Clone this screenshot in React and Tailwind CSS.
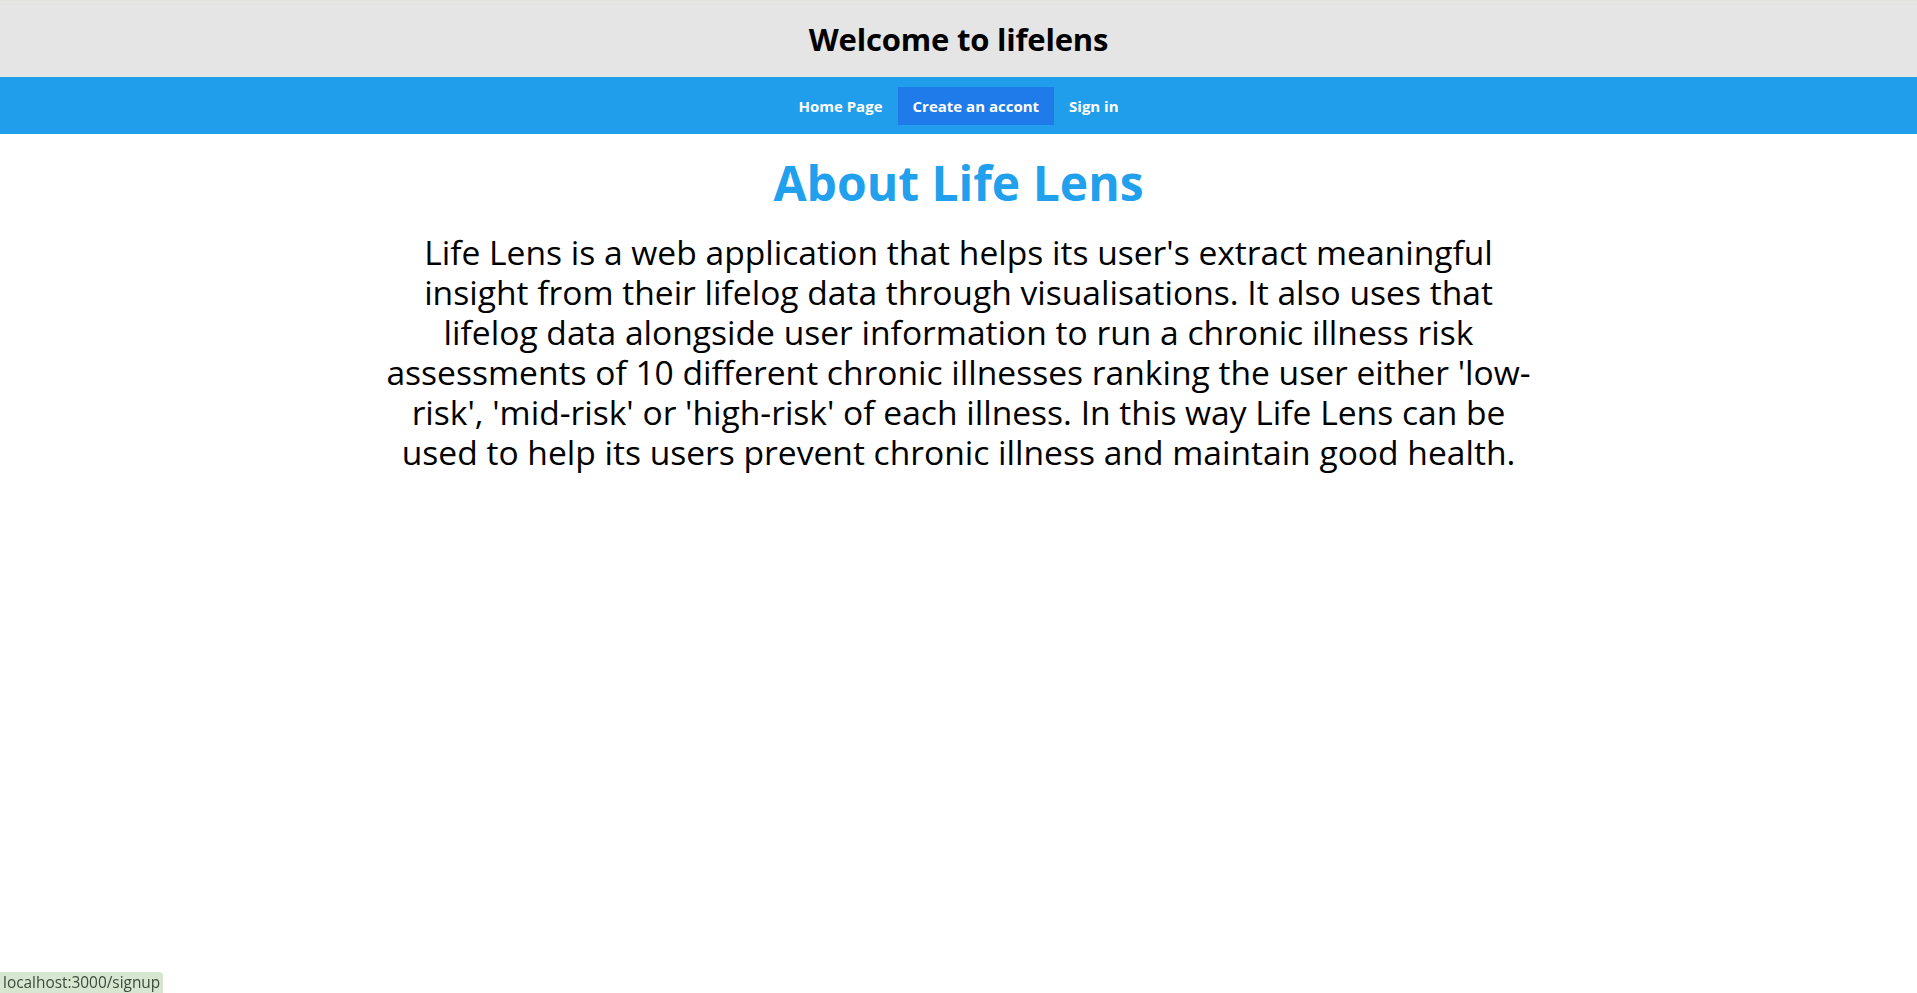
export default function App() {
    const links = [
        { label: 'Home Page', active: false },
        { label: 'Create an accont', active: true },
        { label: 'Sign in', active: false },
    ];

    return (
        <div className="min-h-screen bg-white font-['Open_Sans',sans-serif] text-black">
            <header className="flex h-[77px] items-center justify-center border-t border-[#dfe3dc] bg-[#e5e5e5]">
                <h1 className="text-[31px] font-bold tracking-[-0.2px]">Welcome to lifelens</h1>
            </header>

            <nav className="flex h-[57px] items-start justify-center bg-[#219eeb] pt-[10px]">
                {links.map((link) => (
                    <a
                        key={link.label}
                        href="#"
                        className={
                            'flex h-[38px] items-center px-[15px] text-[15px] font-bold text-white ' +
                            (link.active ? 'bg-[#1f7aea]' : '')
                        }
                    >
                        {link.label}
                    </a>
                ))}
            </nav>

            <main className="flex flex-col items-center">
                <h2 className="mt-[20px] text-[48px] font-bold leading-[1.2] text-[#21a0ed]">About Life Lens</h2>
                <p className="mt-[20px] w-[1160px] text-center text-[33.6px] leading-[40px]">
                    Life Lens is a web application that helps its user's extract meaningful insight from their
                    lifelog data through visualisations. It also uses that lifelog data alongside user information
                    to run a chronic illness risk assessments of 10 different chronic illnesses ranking the user
                    either 'low-risk', 'mid-risk' or 'high-risk' of each illness. In this way Life Lens can be used
                    to help its users prevent chronic illness and maintain good health.
                </p>
            </main>

            <div className="fixed bottom-0 left-0 flex h-[21px] items-center rounded-tr-[4px] bg-[#d6e6d1] px-[3px] text-[15.4px] text-[#3b4a3a]">
                localhost:3000/signup
            </div>
        </div>
    );
}
